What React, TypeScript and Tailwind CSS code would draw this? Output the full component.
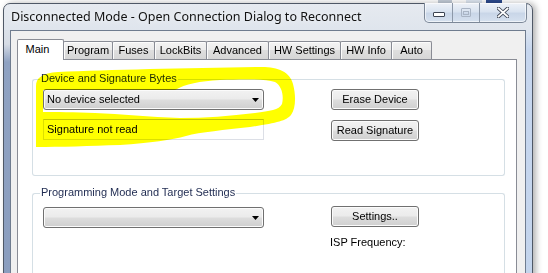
import React from "react";

const btnBg =
  "bg-[linear-gradient(to_bottom,#f2f2f2,#ebebeb_48%,#dddddd_52%,#cfcfcf)] border border-[#707070] rounded-[3px] shadow-[inset_0_0_0_1px_#fbfbfb]";

function Button({ label }: { label: string }) {
  return (
    <div className={`w-[88px] h-[21px] flex items-center justify-center text-[11px] leading-[13px] text-black ${btnBg}`}>
      {label}
    </div>
  );
}

function Combo({ text }: { text?: string }) {
  return (
    <div className={`w-[221px] h-[21px] flex items-center pl-[3px] pr-[4px] text-[11px] leading-[13px] text-black ${btnBg}`}>
      <span className="flex-1">{text}</span>
      <svg width="7" height="4" viewBox="0 0 7 4">
        <path d="M0 0H7L3.5 4Z" fill="#000" />
      </svg>
    </div>
  );
}

function GroupHeader({ label }: { label: string }) {
  return (
    <div className="flex h-[13px] items-end">
      <div className="w-[8px] h-[6px] border-l border-t border-[#d5dfe5] rounded-tl-[3px]" />
      <span className="px-[1px] text-[11px] leading-[13px] text-[#1e2a50] self-start">{label}</span>
      <div className="flex-1 h-[6px] border-r border-t border-[#d5dfe5] rounded-tr-[3px]" />
    </div>
  );
}

const tabs: { label: string; cls: string }[] = [
  { label: "Program", cls: "w-[50px]" },
  { label: "Fuses", cls: "w-[43px]" },
  { label: "LockBits", cls: "w-[53px]" },
  { label: "Advanced", cls: "w-[63px]" },
  { label: "HW Settings", cls: "w-[73px]" },
  { label: "HW Info", cls: "w-[52px]" },
  { label: "Auto", cls: "w-[41px]" },
];

export default function App() {
  return (
    <div className="relative w-[548px] h-[273px] overflow-hidden bg-white flex flex-col font-['Liberation_Sans',Arial,sans-serif]">
      {/* bits of the desktop behind the window */}
      <div className="h-[3px] shrink-0 flex">
        <div className="ml-[438px] w-[14px] bg-[#c3ccd8]" />
        <div className="ml-[14px] w-[16px] bg-[#dfe8f3]" />
        <div className="ml-[4px] w-[16px] bg-[#2c4a8e]" />
      </div>
      <div className="flex shrink-0 pl-[3px]">
        {/* window */}
        <div className="w-[530px] h-[300px] shrink-0 flex flex-col border border-[#4f5866] rounded-t-[7px] bg-[linear-gradient(to_bottom,#e6eaf0,#dbe2eb_40px,#d4deea)] shadow-[3px_0_6px_rgba(0,0,0,0.3)]">
          {/* title bar */}
          <div className="h-[26px] shrink-0 flex items-start pl-[7px] pr-[5px]">
            <span className="pt-[5px] text-[12.5px] leading-[16px] text-[#111] font-['Noto_Sans',sans-serif] [text-shadow:0_0_6px_rgba(255,255,255,0.9)]">
              Disconnected Mode - Open Connection Dialog to Reconnect
            </span>
            <div className="ml-auto -mt-[1px] h-[20px] flex border border-t-0 border-[#7c8898] rounded-b-[5px] bg-[linear-gradient(to_bottom,#eef2f8,#d9e3f0_45%,#c9d6e8_55%,#d6e1ef)] shadow-[inset_0_0_0_1px_rgba(255,255,255,0.6)]">
              <div className="w-[28px] flex items-center justify-center border-r border-[#8c98a8]">
                <div className="mt-[3px] w-[12px] h-[5px] border border-[#3c4452] bg-white rounded-[1px]" />
              </div>
              <div className="w-[27px] flex items-center justify-center border-r border-[#8c98a8]">
                <div className="w-[10px] h-[9px] border border-[#a9b4c4] flex items-center justify-center rounded-[1px]">
                  <div className="w-[6px] h-[4px] border border-[#a9b4c4] mt-[1px]" />
                </div>
              </div>
              <div className="w-[46px] flex items-center justify-center">
                <svg width="12" height="11" viewBox="0 0 12 11">
                  <path d="M1.5 1.5L10.5 9.5M10.5 1.5L1.5 9.5" stroke="#3c4452" strokeWidth="3.6" strokeLinecap="square" />
                  <path d="M1.5 1.5L10.5 9.5M10.5 1.5L1.5 9.5" stroke="#ffffff" strokeWidth="1.8" strokeLinecap="square" />
                </svg>
              </div>
            </div>
          </div>
          {/* body */}
          <div className="flex flex-1">
            <div className="w-[6px] bg-[linear-gradient(to_bottom,#dbe1e9,#d6dce5_14px,#8fa2c2_32px,#8a9dbe)]" />
            <div className="flex-1 border border-[#6f7c8f] bg-[#f0f0f0] pt-[8px] pl-[6px] pr-[8px] flex flex-col text-[11px] leading-[13px]">
              {/* tabs */}
              <div className="flex items-end h-[20px] shrink-0">
                <div className="relative z-10 w-[47px] h-[21px] -mb-[1px] bg-white border border-b-0 border-[#898c95] rounded-t-[2px] flex justify-center pt-[3px] pr-[6px]">
                  Main
                </div>
                {tabs.map((t) => (
                  <div
                    key={t.label}
                    className={`${t.cls} -ml-[1px] h-[18px] border border-b-0 border-[#898c95] rounded-t-[2px] flex justify-center pt-[2px] bg-[linear-gradient(to_bottom,#f3f3f3,#ebebeb_50%,#dedede_50%,#d6d6d6)] shadow-[inset_1px_1px_0_#fcfcfc]`}
                  >
                    {t.label}
                  </div>
                ))}
              </div>
              {/* page */}
              <div className="flex-1 bg-white border border-[#898c95] pt-[12px] pl-[14px] pr-[11px]">
                {/* group 1 */}
                <GroupHeader label="Device and Signature Bytes" />
                <div className="border-x border-b border-[#d5dfe5] rounded-b-[3px] pl-[10px] pt-[4px] pb-[34px] flex">
                  <div className="flex flex-col gap-[9px]">
                    <Combo text="No device selected" />
                    <div className="w-[221px] h-[21px] border border-[#dcdfe6] border-t-[#c3c6ce] flex items-center pl-[3px]">
                      Signature not read
                    </div>
                  </div>
                  <div className="ml-[67px] flex flex-col gap-[10px]">
                    <Button label="Erase Device" />
                    <Button label="Read Signature" />
                  </div>
                </div>
                {/* group 2 */}
                <div className="mt-[10px]">
                  <GroupHeader label="Programming Mode and Target Settings" />
                  <div className="border-x border-[#d5dfe5] pl-[10px] pt-[7px] h-[80px] flex">
                    <div className="pt-[1px]">
                      <Combo />
                    </div>
                    <div className="ml-[67px] flex flex-col">
                      <Button label="Settings.." />
                      <span className="mt-[9px] -ml-[1px]">ISP Frequency:</span>
                    </div>
                  </div>
                </div>
              </div>
            </div>
            <div className="w-[6px] bg-[linear-gradient(to_bottom,#dde5f0,#c6d6ee_20px,#c3d4ec)]" />
          </div>
        </div>
      </div>

      {/* highlighter annotation drawn over the dialog */}
      <svg className="absolute left-0 top-0 pointer-events-none mix-blend-multiply" width="548" height="273" viewBox="0 0 548 273">
        <path
          fillRule="evenodd"
          fill="#ffff00"
          d="M36 147 L36 86 C36 78 42 73 58 72 C110 70 190 68 262 67 C278 67 290 72 293 84 C296 95 296 108 291 115 C286 121 276 123 250 127 C225 130 200 132 186 136 C172 140 150 143 120 145 C90 146 60 147 36 147 Z
             M43 112 L43 90 L175 90 C185 84 200 81 220 80 C245 79 265 79 275 82 C282 86 284 96 282 104 C279 110 270 111 255 113 C230 116 205 118 180 118 C150 117 120 114 95 113 C75 112 55 112 43 112 Z"
        />
      </svg>
    </div>
  );
}
